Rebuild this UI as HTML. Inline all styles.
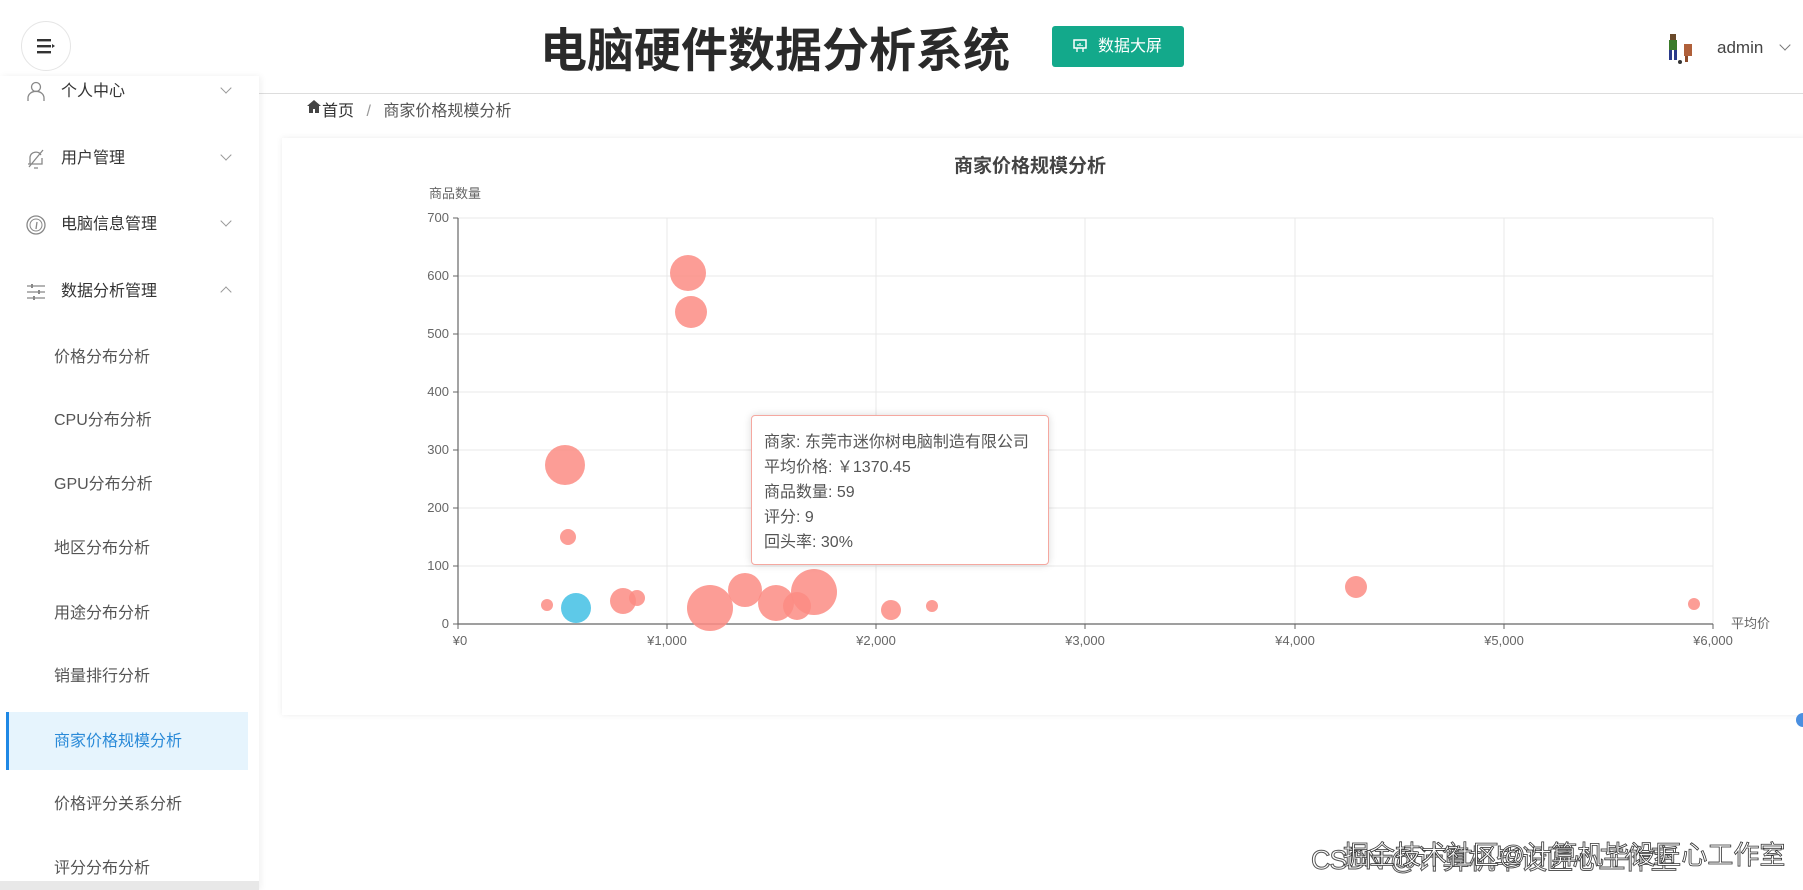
<!DOCTYPE html>
<html><head><meta charset="utf-8"><style>
*{margin:0;padding:0;box-sizing:border-box}
body{width:1803px;height:890px;overflow:hidden;background:#fff;position:relative;font-family:"Liberation Sans","Noto Sans CJK SC",sans-serif;color:#333}
.a{position:absolute;white-space:nowrap}
.mi{position:absolute;left:61px;font-size:16px;color:#333;line-height:20px}
.si{position:absolute;left:54px;font-size:16px;color:#555;line-height:20px}
.ch{position:absolute;left:222px;width:8px;height:8px;border-right:1px solid #999;border-bottom:1px solid #999;transform:rotate(45deg)}
</style></head><body>
<div class="a" style="left:21px;top:21px;width:50px;height:50px;border-radius:50%;border:1px solid #e5e5e5;background:#fff"></div>
<svg class="a" style="left:36px;top:37px" width="20" height="18" viewBox="0 0 20 18"><rect x="1" y="2" width="14" height="2.4" fill="#333"/><rect x="1" y="8" width="14" height="2.4" fill="#333"/><rect x="1" y="14" width="14" height="2.4" fill="#333"/><path d="M16 7l3 2-3 2z" fill="#333"/></svg>
<div class="a" style="left:540px;top:21px;font-size:47px;font-weight:bold;color:#2a2a2a;line-height:60px">电脑硬件数据分析系统</div>
<div class="a" style="left:1052px;top:26px;width:132px;height:41px;background:#13a98b;border-radius:3px;color:#fff;font-size:16px;line-height:41px;padding-left:46px">数据大屏</div>
<svg class="a" style="left:1072px;top:38px" width="16" height="16" viewBox="0 0 16 16"><rect x="2" y="2" width="12" height="8" fill="none" stroke="#fff" stroke-width="1.5"/><path d="M5 10v4M11 10v4M6 8V6M8 8V5M10 8V7" stroke="#fff" stroke-width="1.3"/></svg>
<svg class="a" style="left:1664px;top:32px" width="34" height="34" viewBox="0 0 34 34"><rect x="6" y="2" width="6" height="6" fill="#6a4a2a"/><rect x="5" y="8" width="8" height="10" fill="#3a7a2a"/><rect x="5" y="18" width="3" height="10" fill="#2a3a8a"/><rect x="10" y="18" width="3" height="10" fill="#2a3a8a"/><rect x="20" y="12" width="8" height="12" fill="#b0603a"/><rect x="21" y="24" width="3" height="6" fill="#8a4a2a"/><circle cx="16" cy="30" r="2" fill="#333"/></svg>
<div class="a" style="left:1717px;top:38px;font-size:17px;color:#444">admin</div>
<div class="a" style="left:1781px;top:41px;width:8px;height:8px;border-right:1px solid #777;border-bottom:1px solid #777;transform:rotate(45deg)"></div>
<div class="a" style="left:259px;top:93px;width:1544px;height:1px;background:#ddd"></div>
<div class="a" style="left:0;top:76px;width:259px;height:814px;background:#fff;box-shadow:2px 0 6px rgba(0,0,0,0.06)"></div>
<svg class="a" style="left:26px;top:81px" width="20" height="22" viewBox="0 0 20 22"><circle cx="10" cy="6" r="4.5" fill="none" stroke="#888" stroke-width="1.3"/><path d="M2 20v-3a6 5 0 0 1 16 0v3" fill="none" stroke="#888" stroke-width="1.3"/></svg>
<div class="mi" style="top:82px">个人中心</div><div class="ch" style="top:84px"></div>
<svg class="a" style="left:26px;top:148px" width="20" height="22" viewBox="0 0 20 22"><path d="M4 16V9a6 6 0 0 1 11-2M16 10v6H2M3 19l14-17M8 20h4" fill="none" stroke="#888" stroke-width="1.3"/></svg>
<div class="mi" style="top:149px">用户管理</div><div class="ch" style="top:151px"></div>
<svg class="a" style="left:25px;top:214px" width="22" height="22" viewBox="0 0 22 22"><circle cx="11" cy="11" r="9" fill="none" stroke="#888" stroke-width="1.3"/><circle cx="11" cy="11" r="6" fill="none" stroke="#888" stroke-width="1"/><path d="M11 15l1-7" stroke="#888" stroke-width="1.3"/></svg>
<div class="mi" style="top:215px">电脑信息管理</div><div class="ch" style="top:217px"></div>
<svg class="a" style="left:26px;top:282px" width="20" height="20" viewBox="0 0 20 20"><path d="M1 4h18M1 10h18M1 16h18" stroke="#888" stroke-width="1.3"/><path d="M6 2v4M13 8v4M8 14v4" stroke="#888" stroke-width="2"/></svg>
<div class="mi" style="top:282px">数据分析管理</div><div class="ch" style="top:288px;transform:rotate(225deg)"></div>
<div class="si" style="top:348px">价格分布分析</div>
<div class="si" style="top:411px">CPU分布分析</div>
<div class="si" style="top:475px">GPU分布分析</div>
<div class="si" style="top:539px">地区分布分析</div>
<div class="si" style="top:604px">用途分布分析</div>
<div class="si" style="top:667px">销量排行分析</div>
<div class="a" style="left:6px;top:712px;width:242px;height:58px;background:#e6f4fd;border-left:3px solid #1e88e5"></div>
<div class="si" style="top:732px;color:#2a8ad8">商家价格规模分析</div>
<div class="si" style="top:795px">价格评分关系分析</div>
<div class="si" style="top:859px">评分分布分析</div>
<div class="a" style="left:0;top:881px;width:259px;height:9px;background:#e8e8e8"></div>
<svg class="a" style="left:307px;top:100px" width="14" height="13" viewBox="0 0 14 13"><path d="M7 0L0 6h2v7h4V9h2v4h4V6h2z" fill="#444"/></svg>
<div class="a" style="left:322px;top:97px;font-size:16px;color:#333">首页 <span style="color:#999;margin:0 8px">/</span> <span style="color:#555">商家价格规模分析</span></div>
<div class="a" style="left:282px;top:138px;width:1525px;height:577px;background:#fff;box-shadow:0 0 6px rgba(0,0,0,0.08)"></div>
<div class="a" style="left:954px;top:151px;font-size:19px;font-weight:bold;color:#444">商家价格规模分析</div>
<div class="a" style="left:429px;top:183px;font-size:13px;color:#666">商品数量</div>
<svg class="a" style="left:0;top:0" width="1803" height="890" viewBox="0 0 1803 890">
<g stroke="#e8e8e8" stroke-width="1">
<path d="M458 218H1713M458 276H1713M458 334H1713M458 392H1713M458 450H1713M458 508H1713M458 566H1713"/>
<path d="M667 218V624M876 218V624M1085 218V624M1295 218V624M1504 218V624M1713 218V624"/>
</g>
<path d="M458 218V624H1713" stroke="#666" stroke-width="1.2" fill="none"/>
<g stroke="#666"><path d="M453 218h5M453 276h5M453 334h5M453 392h5M453 450h5M453 508h5M453 566h5M453 624h5M458 624v5M667 624v5M876 624v5M1085 624v5M1295 624v5M1504 624v5M1713 624v5"/></g>
<g font-family="Liberation Sans" font-size="13" fill="#666" text-anchor="end">
<text x="449" y="222">700</text><text x="449" y="280">600</text><text x="449" y="338">500</text><text x="449" y="396">400</text><text x="449" y="454">300</text><text x="449" y="512">200</text><text x="449" y="570">100</text><text x="449" y="628">0</text>
</g>
<g font-family="Liberation Sans" font-size="13" fill="#666" text-anchor="middle">
<text x="460" y="645">¥0</text><text x="667" y="645">¥1,000</text><text x="876" y="645">¥2,000</text><text x="1085" y="645">¥3,000</text><text x="1295" y="645">¥4,000</text><text x="1504" y="645">¥5,000</text><text x="1713" y="645">¥6,000</text>
</g>
<text x="1731" y="628" font-family="Liberation Sans,Noto Sans CJK SC" font-size="13" fill="#666">平均价</text>
<g fill="#fb8c84" fill-opacity="0.85">
<circle cx="688" cy="273" r="18"/><circle cx="691" cy="312" r="16"/><circle cx="565" cy="465" r="20"/><circle cx="568" cy="537" r="8"/><circle cx="547" cy="605" r="6"/>
<circle cx="623" cy="601" r="13"/><circle cx="637" cy="598" r="8"/><circle cx="710" cy="608" r="23"/><circle cx="745" cy="590" r="17"/><circle cx="776" cy="603" r="18"/><circle cx="797" cy="606" r="14"/><circle cx="814" cy="592" r="23"/><circle cx="891" cy="610" r="10"/><circle cx="932" cy="606" r="6"/><circle cx="1356" cy="587" r="11"/><circle cx="1694" cy="604" r="6"/>
</g>
<circle cx="576" cy="608" r="15" fill="#4cc3e6" fill-opacity="0.9"/>
<circle cx="1803" cy="720" r="7" fill="#4a8fe0"/>
</svg>
<div class="a" style="left:751px;top:415px;width:298px;height:150px;background:#fff;border:1px solid #f5a8a0;border-radius:4px;box-shadow:0 0 8px rgba(0,0,0,0.15);padding:14px 12px;font-size:16px;color:#555;line-height:25px">商家: 东莞市迷你树电脑制造有限公司<br>平均价格: ￥1370.45<br>商品数量: 59<br>评分: 9<br>回头率: 30%</div>
<div class="a" style="left:1311px;top:838px;font-size:27px;color:#fff;-webkit-text-stroke:1px #555;letter-spacing:-1px">CSDN @计算机毕设匠心工作室</div>
<div class="a" style="left:1343px;top:835px;font-size:26px;color:#fff;-webkit-text-stroke:0.8px #333">掘金技术社区@计算机毕设匠心工作室</div>
</body></html>
